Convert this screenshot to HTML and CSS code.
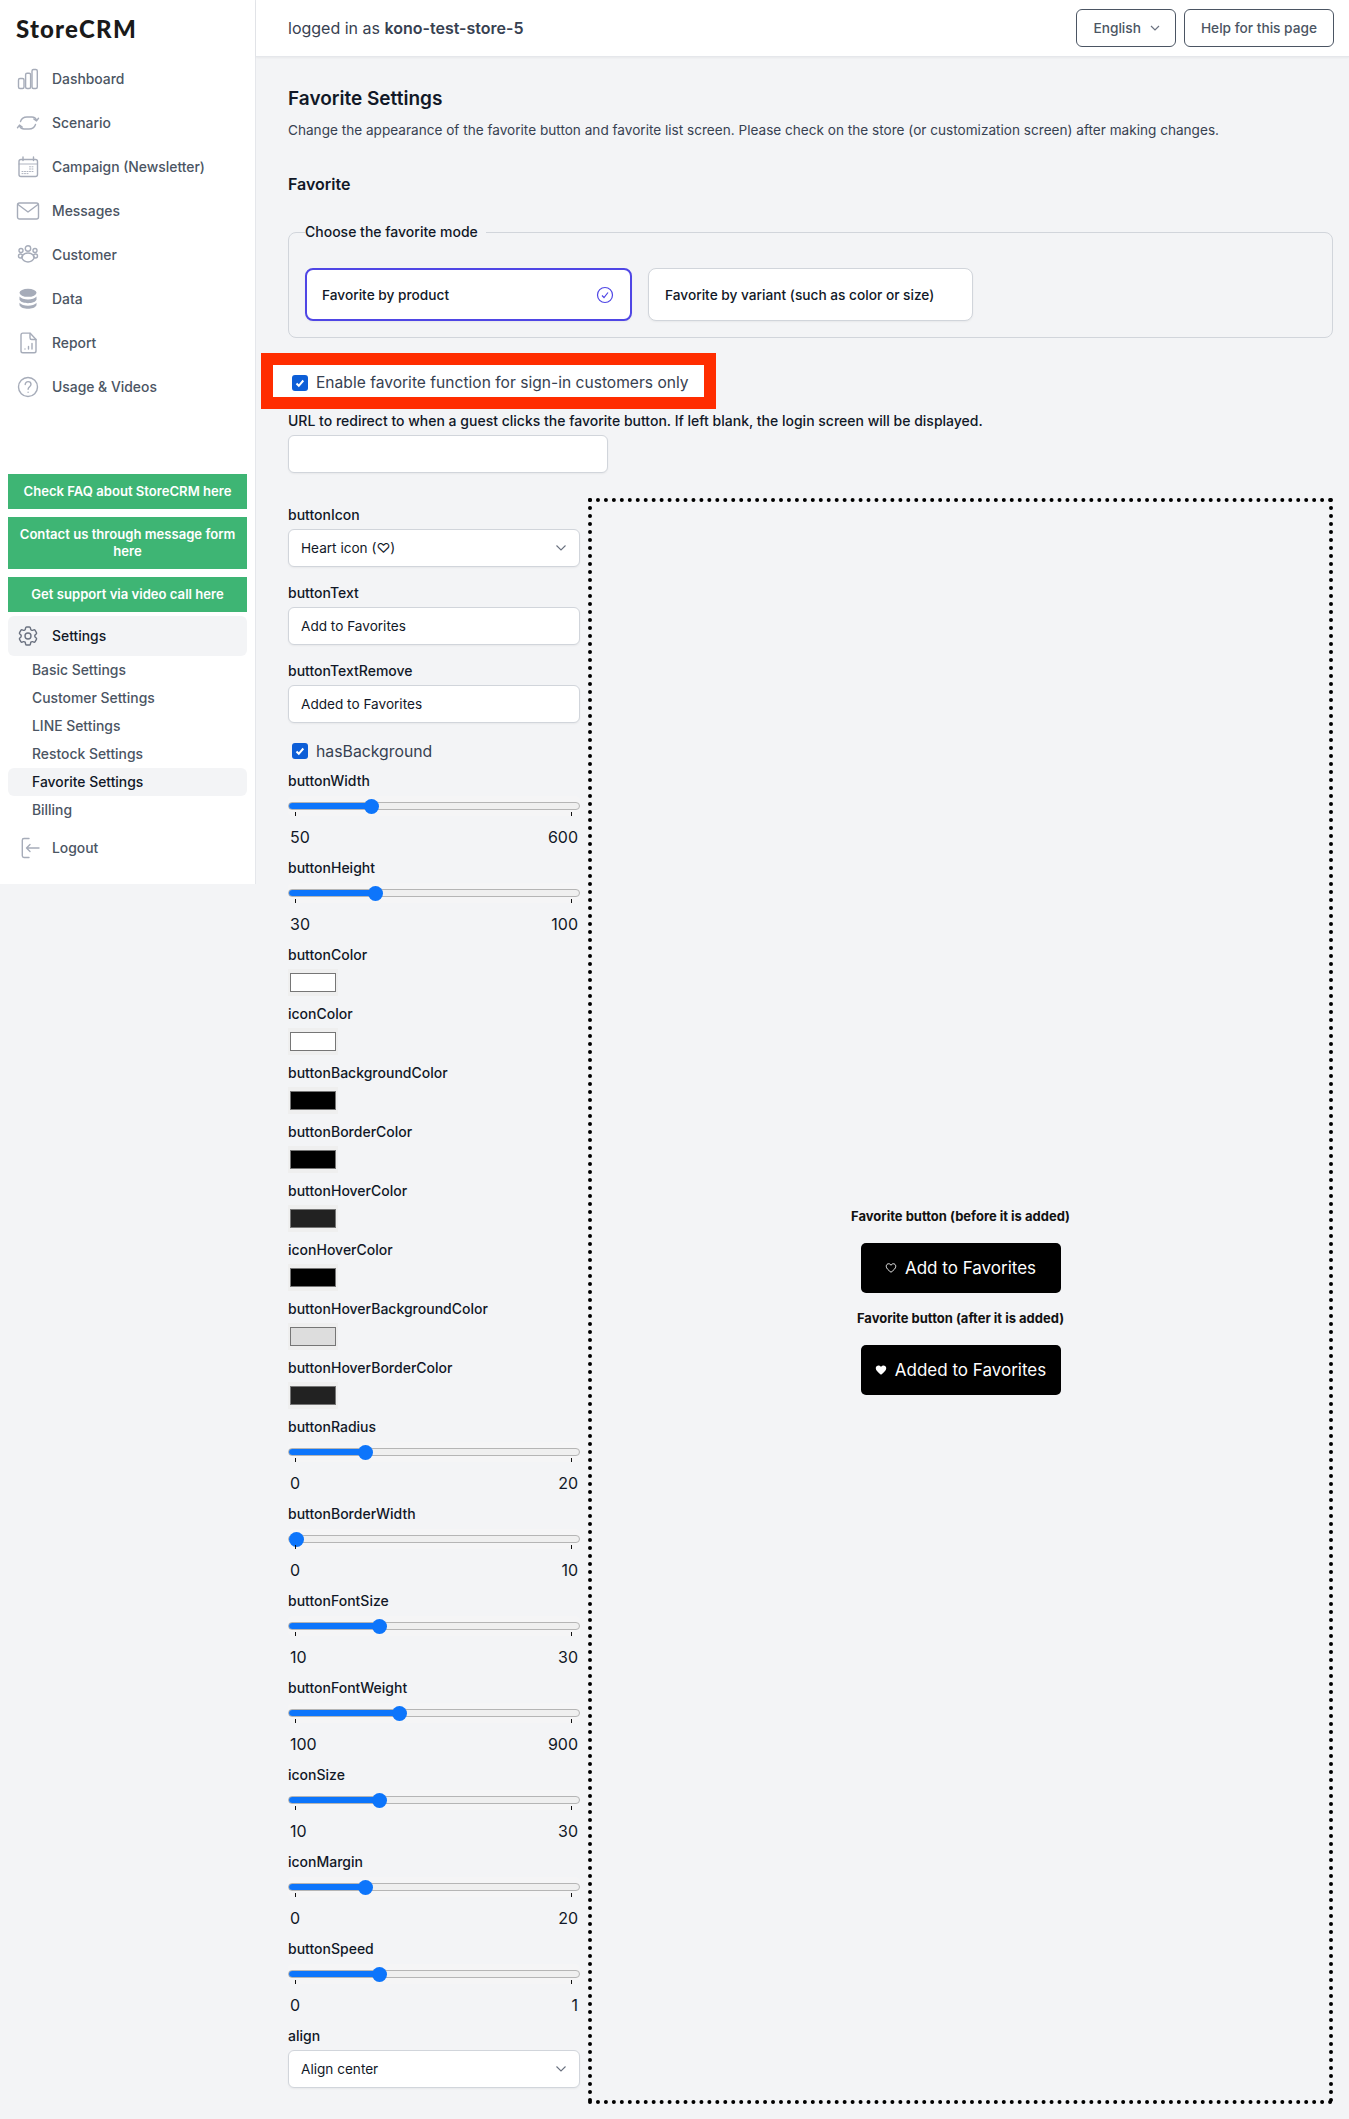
FILE: index.html
```html
<!DOCTYPE html>
<html lang="en">
<head>
<meta charset="utf-8">
<title>Favorite Settings - StoreCRM</title>
<link rel="stylesheet" href="styles.css">
</head>
<body>
<div class="app">
  <aside class="sidebar">
    <div class="logo">StoreCRM</div>
    <nav class="nav">
      <a class="nav-item"><svg class="ico" viewBox="0 0 24 24"><rect x="2.5" y="11.5" width="5.5" height="10" rx="1.5"/><rect x="9.6" y="6.2" width="5" height="15.3" rx="1.5"/><rect x="16" y="2.5" width="5.3" height="19" rx="1.5"/></svg>Dashboard</a>
      <a class="nav-item"><svg class="ico" viewBox="0 0 24 24"><path d="M4.500 10.500C5.500 7.500 8 6 11 6h5c2 0 3.400.9 4.300 2.900"/><path d="M17.800 8l2.700 1.900 2-2.600"/><path d="M19.500 13.500c-1 3-3.500 4.500-6.500 4.500H8c-2 0-3.400-.9-4.300-2.900"/><path d="M6.200 16l-2.700-1.900-2 2.600"/></svg>Scenario</a>
      <a class="nav-item"><svg class="ico" viewBox="0 0 24 24"><rect x="3" y="4.500" width="18.500" height="17" rx="2"/><path class="fine" d="M3 9h18.500" stroke-width="2.400"/><path d="M7 2v3.500M17.500 2v3.500"/><path class="fine" d="M6 16.500h1M8.500 16.500h1M11 16.500h1M13.500 16.500h1M13.500 14h1M16 14h1M16 16.500h1M16 11.800h1M13.500 11.800h1M6 18.600h1M8.500 18.600h1M11 18.600h1"/></svg>Campaign (Newsletter)</a>
      <a class="nav-item"><svg class="ico" viewBox="0 0 24 24"><rect x="1.500" y="4" width="21" height="16" rx="2"/><path d="M2 5.500l10 7.500 10-7.500"/></svg>Messages</a>
      <a class="nav-item"><svg class="ico" viewBox="0 0 24 24"><circle cx="12" cy="5.500" r="2.700"/><circle cx="5" cy="7.500" r="2"/><circle cx="19" cy="7.500" r="2"/><circle cx="4.500" cy="13" r="2"/><circle cx="19.500" cy="13" r="2"/><path d="M12 10c-3.500 0-5.500 2-6.500 4.500 1.500 3 4 4.500 6.500 4.500s5-1.500 6.500-4.500C17.500 12 15.500 10 12 10z"/></svg>Customer</a>
      <a class="nav-item"><svg class="ico solid" viewBox="0 0 24 24"><ellipse cx="12" cy="5.800" rx="8.500" ry="4"/><path d="M3.500 9.500c1.500 2 5 3 8.500 3s7-1 8.500-3v3.300c-1 2.400-5 3.400-8.500 3.400s-7.500-1-8.500-3.400z"/><path d="M3.500 15.800c1.500 2 5 3 8.500 3s7-1 8.500-3v2.500c-1 2.400-5 3.500-8.500 3.500s-7.500-1.100-8.500-3.500z"/></svg>Data</a>
      <a class="nav-item"><svg class="ico" viewBox="0 0 24 24"><path d="M5 4c0-1 .8-1.900 1.800-1.900H14l6 6.400V20c0 1-.8 1.800-1.800 1.800H6.800C5.800 21.800 5 21 5 20z"/><path d="M14 2.500v4.200c0 1 .7 1.800 1.700 1.800H20"/><path d="M9 18v.1M12.500 15.500V18M16 12.500V18"/></svg>Report</a>
      <a class="nav-item"><svg class="ico" viewBox="0 0 24 24"><circle cx="12" cy="12" r="9.500"/><path d="M9.200 9.500c0-1.700 1.300-2.900 2.900-2.900s2.900 1.100 2.900 2.700c0 2.400-2.900 2.400-2.900 5"/><path d="M12.100 17.200v.1"/></svg>Usage &amp; Videos</a>
    </nav>
    <div class="help-links">
      <a class="help-link">Check FAQ about StoreCRM here</a>
      <a class="help-link">Contact us through message form here</a>
      <a class="help-link">Get support via video call here</a>
    </div>
    <a class="nav-item settings"><svg class="ico dark" viewBox="0 0 24 24"><path d="M9.594 3.940c.09-.542.56-.94 1.110-.94h2.593c.55 0 1.020.398 1.110.94l.213 1.281c.063.374.313.686.645.870.074.04.147.083.22.127.324.196.72.257 1.075.124l1.217-.456a1.125 1.125 0 011.370.49l1.296 2.247a1.125 1.125 0 01-.26 1.431l-1.003.827c-.293.24-.438.613-.431.992a6.759 6.759 0 010 .255c-.007.378.138.75.43.99l1.005.828c.424.35.534.954.26 1.430l-1.298 2.247a1.125 1.125 0 01-1.369.491l-1.217-.456c-.355-.133-.75-.072-1.076.124a6.570 6.570 0 01-.22.128c-.331.183-.581.495-.644.869l-.213 1.280c-.09.543-.56.941-1.110.941h-2.594c-.55 0-1.020-.398-1.110-.94l-.213-1.281c-.062-.374-.312-.686-.644-.87a6.520 6.520 0 01-.22-.127c-.325-.196-.72-.257-1.076-.124l-1.217.456a1.125 1.125 0 01-1.369-.49l-1.297-2.247a1.125 1.125 0 01.26-1.431l1.004-.827c.292-.24.437-.613.43-.992a6.932 6.932 0 010-.255c.007-.378-.138-.75-.43-.99l-1.004-.828a1.125 1.125 0 01-.26-1.430l1.297-2.247a1.125 1.125 0 011.370-.491l1.216.456c.356.133.751.072 1.076-.124.072-.044.146-.087.22-.128.332-.183.582-.495.644-.869l.214-1.281z"/><circle cx="12" cy="12" r="3"/></svg>Settings</a>
    <div class="subnav">
      <a class="sub-item">Basic Settings</a>
      <a class="sub-item">Customer Settings</a>
      <a class="sub-item">LINE Settings</a>
      <a class="sub-item">Restock Settings</a>
      <a class="sub-item active">Favorite Settings</a>
      <a class="sub-item">Billing</a>
    </div>
    <a class="nav-item"><svg class="ico" viewBox="0 0 24 24"><path d="M13 2.500H8c-1 0-1.700.8-1.700 1.700v15.600c0 1 .7 1.700 1.700 1.700h5"/><path d="M23 12H10.500M14 8.500L10.500 12l3.500 3.500"/></svg>Logout</a>
  </aside>

  <div class="page">
    <header class="topbar">
      <div class="login">logged in as <strong>kono-test-store-5</strong></div>
      <div class="top-actions">
        <button class="top-btn lang"><span>English</span><svg class="chev" viewBox="0 0 12 12"><path d="M2 4l4 4 4-4"/></svg></button>
        <button class="top-btn">Help for this page</button>
      </div>
    </header>

    <main class="content">
      <h1 class="title">Favorite Settings</h1>
      <p class="subtitle">Change the appearance of the favorite button and favorite list screen. Please check on the store (or customization screen) after making changes.</p>
      <h2 class="section">Favorite</h2>

      <fieldset class="mode">
        <legend class="mode-legend">Choose the favorite mode</legend>
        <div class="mode-grid">
          <div class="mode-card selected"><span>Favorite by product</span><svg class="mode-check" viewBox="0 0 20 20"><circle cx="10" cy="10" r="7.500"/><path d="M7 10.500l2 2 4-5"/></svg></div>
          <div class="mode-card"><span>Favorite by variant (such as color or size)</span></div>
        </div>
      </fieldset>

      <label class="callout"><input class="check" type="checkbox" checked>Enable favorite function for sign-in customers only</label>

      <label class="field-label url-label">URL to redirect to when a guest clicks the favorite button. If left blank, the login screen will be displayed.</label>
      <input class="text-input url-input" type="text">

      <div class="editor">
        <div class="controls">
          <div class="label-row first">buttonIcon</div>
          <select class="text-input select"><option>Heart icon (♡)</option></select>
          <div class="label-row">buttonText</div>
          <input class="text-input" type="text" value="Add to Favorites">
          <div class="label-row">buttonTextRemove</div>
          <input class="text-input" type="text" value="Added to Favorites">
          <label class="check-row"><input class="check" type="checkbox" checked>hasBackground</label>

          <div class="slider"><div class="slider-label">buttonWidth</div><div class="range-box"><input class="range" type="range" min="50" max="600" value="200" style="--fill:27.3%"></div><div class="range-ends"><span>50</span><span>600</span></div></div>
          <div class="slider"><div class="slider-label">buttonHeight</div><div class="range-box"><input class="range" type="range" min="30" max="100" value="50" style="--fill:28.6%"></div><div class="range-ends"><span>30</span><span>100</span></div></div>

          <div class="color"><div class="color-label">buttonColor</div><input class="swatch" type="color" value="#ffffff"></div>
          <div class="color"><div class="color-label">iconColor</div><input class="swatch" type="color" value="#ffffff"></div>
          <div class="color"><div class="color-label">buttonBackgroundColor</div><input class="swatch" type="color" value="#000000"></div>
          <div class="color"><div class="color-label">buttonBorderColor</div><input class="swatch" type="color" value="#000000"></div>
          <div class="color"><div class="color-label">buttonHoverColor</div><input class="swatch" type="color" value="#222222"></div>
          <div class="color"><div class="color-label">iconHoverColor</div><input class="swatch" type="color" value="#000000"></div>
          <div class="color"><div class="color-label">buttonHoverBackgroundColor</div><input class="swatch" type="color" value="#dddddd"></div>
          <div class="color"><div class="color-label">buttonHoverBorderColor</div><input class="swatch" type="color" value="#222222"></div>

          <div class="slider"><div class="slider-label">buttonRadius</div><div class="range-box"><input class="range" type="range" min="0" max="20" value="5" style="--fill:25%"></div><div class="range-ends"><span>0</span><span>20</span></div></div>
          <div class="slider"><div class="slider-label">buttonBorderWidth</div><div class="range-box"><input class="range" type="range" min="0" max="10" value="0" style="--fill:0%"></div><div class="range-ends"><span>0</span><span>10</span></div></div>
          <div class="slider"><div class="slider-label">buttonFontSize</div><div class="range-box"><input class="range" type="range" min="10" max="30" value="16" style="--fill:30%"></div><div class="range-ends"><span>10</span><span>30</span></div></div>
          <div class="slider"><div class="slider-label">buttonFontWeight</div><div class="range-box"><input class="range" type="range" min="100" max="900" value="400" style="--fill:37.5%"></div><div class="range-ends"><span>100</span><span>900</span></div></div>
          <div class="slider"><div class="slider-label">iconSize</div><div class="range-box"><input class="range" type="range" min="10" max="30" value="16" style="--fill:30%"></div><div class="range-ends"><span>10</span><span>30</span></div></div>
          <div class="slider"><div class="slider-label">iconMargin</div><div class="range-box"><input class="range" type="range" min="0" max="20" value="5" style="--fill:25%"></div><div class="range-ends"><span>0</span><span>20</span></div></div>
          <div class="slider"><div class="slider-label">buttonSpeed</div><div class="range-box"><input class="range" type="range" min="0" max="1" step="0.1" value="0.3" style="--fill:30%"></div><div class="range-ends"><span>0</span><span>1</span></div></div>

          <div class="label-row last">align</div>
          <select class="text-input select"><option>Align center</option></select>
        </div>

        <div class="preview">
          <div class="preview-caption">Favorite button (before it is added)</div>
          <button class="fav-btn"><svg class="heart" viewBox="0 0 24 24"><path class="heart-line" d="M12 20.500C7 16.500 2.500 13 2.500 8.500 2.500 5.500 4.800 3.500 7.300 3.500c2 0 3.700 1 4.700 3 1-2 2.700-3 4.700-3 2.500 0 4.800 2 4.800 5 0 4.500-4.500 8-9.500 12z"/></svg>Add to Favorites</button>
          <div class="preview-caption second">Favorite button (after it is added)</div>
          <button class="fav-btn"><svg class="heart" viewBox="0 0 24 24"><path class="heart-fill" d="M12 21.500C7 17 1.500 13.500 1.500 8.500 1.500 5 4.300 3 7 3c2 0 3.900 1 5 3 1.100-2 3-3 5-3 2.700 0 5.500 2 5.500 5.500 0 5-5.500 8.500-10.500 13z"/></svg>Added to Favorites</button>
        </div>
      </div>
    </main>
  </div>
</div>
</body>
</html>
```

FILE: styles.css
```css
* { box-sizing: border-box; }

html, body { margin: 0; padding: 0; }

body {
  background: #f3f4f6;
  color: #111827;
  font-family: Inter, "Liberation Sans", sans-serif;
  font-size: 14px;
}

.app { display: flex; align-items: flex-start; min-height: 2119px; }

/* Sidebar */
.sidebar {
  width: 256px;
  flex: none;
  background: #fff;
  border-right: 1px solid #e5e7eb;
  padding: 0 8px 14px;
}

.logo {
  height: 57px;
  padding: 12px 8px 0;
  font-family: Lato, sans-serif;
  font-size: 24px;
  line-height: 34px;
  font-weight: 900;
  letter-spacing: 1.2px;
  color: #1a1a1a;
}

.nav { display: flex; flex-direction: column; margin-bottom: 65px; }

.nav-item {
  display: flex;
  align-items: center;
  gap: 12px;
  height: 44px;
  padding-left: 8px;
  color: #4b5563;
  font-size: 13.9px;
  font-weight: 500;
  border-radius: 6px;
}

.ico {
  width: 24px;
  height: 24px;
  flex: none;
  fill: none;
  stroke: #a6acb9;
  stroke-width: 1.4;
  stroke-linecap: round;
  stroke-linejoin: round;
}

.ico .fine { stroke-width: .9; }
.ico.solid { fill: #a6acb9; stroke: none; }
.ico.dark { stroke: #6b7280; }

.help-links { display: flex; flex-direction: column; gap: 8px; }

.help-link {
  display: block;
  background: #3eb574;
  color: #fff;
  padding: 9px 8px;
  font-size: 13.1px;
  line-height: 17px;
  font-weight: 600;
  text-align: center;
}

.settings {
  margin-top: 4px;
  height: 40px;
  background: #f3f4f6;
  color: #111827;
}

.subnav { display: flex; flex-direction: column; margin-bottom: 2px; }

.sub-item {
  display: flex;
  align-items: center;
  height: 28px;
  padding-left: 24px;
  color: #4b5563;
  font-size: 13.9px;
  font-weight: 500;
  border-radius: 6px;
}

.sub-item.active { background: #f3f4f6; color: #111827; }

/* Main */
.page { flex: 1; min-width: 0; }

.topbar {
  display: flex;
  align-items: center;
  justify-content: space-between;
  height: 57px;
  padding: 0 15px 1px 32px;
  background: #fff;
  border-bottom: 1px solid #e5e7eb;
  box-shadow: 0 1px 2px rgba(0, 0, 0, .05);
}

.login { font-size: 16px; color: #374151; }
.login strong { font-weight: 600; }

.top-actions { display: flex; gap: 8px; }

.top-btn {
  display: flex;
  align-items: center;
  gap: 8px;
  height: 38px;
  padding: 0 16px;
  background: #fff;
  border: 1px solid #4b5563;
  border-radius: 6px;
  color: #4b5563;
  font: 500 13.7px Inter, sans-serif;
}

.top-btn.lang { padding-right: 14px; }

.chev {
  width: 12px;
  height: 12px;
  fill: none;
  stroke: #6b7280;
  stroke-width: 1.2;
}

.content { padding: 30px 16px 16px 32px; }

.title {
  margin: 0;
  font-size: 19px;
  line-height: 23px;
  font-weight: 600;
  color: #111827;
}

.subtitle {
  margin: 10px 0 0;
  font-size: 13.6px;
  line-height: 20px;
  color: #374151;
}

.section {
  margin: 32px 0 0;
  font-size: 16px;
  line-height: 24px;
  font-weight: 600;
  color: #111827;
}

.mode {
  margin: 26px 0 0;
  padding: 26px 16px 16px;
  border: 1px solid #d1d5db;
  border-radius: 8px;
  min-width: 0;
}

.mode-legend {
  padding: 0 8px 0 0;
  margin-left: 0;
  font-size: 14px;
  line-height: 20px;
  font-weight: 500;
  color: #111827;
}

.mode-grid { display: flex; gap: 16px; }

.mode-card {
  display: flex;
  align-items: center;
  justify-content: space-between;
  width: 325px;
  height: 53px;
  padding: 0 16px;
  background: #fff;
  border: 1px solid #d1d5db;
  border-radius: 8px;
  box-shadow: 0 1px 2px rgba(0, 0, 0, .05);
  font-size: 13.7px;
  font-weight: 500;
  color: #111827;
}

.mode-card.selected { width: 327px; border: 2px solid #4f46e5; padding: 0 15px; }

.mode-check {
  width: 20px;
  height: 20px;
  fill: none;
  stroke: #4f46e5;
  stroke-width: 1.200;
}

.callout {
  display: flex;
  align-items: center;
  gap: 8px;
  width: fit-content;
  height: 56px;
  margin: 15px 0 0 -27px;
  padding: 3px 15px 0 19px;
  background: #fff;
  border: 12px solid #ff2d00;
  font-size: 15.6px;
  color: #374151;
}

.check {
  appearance: none;
  width: 16px;
  height: 16px;
  margin: 0;
  flex: none;
  border-radius: 3px;
  background: #0d5ed7 url("data:image/svg+xml,%3Csvg xmlns='http://www.w3.org/2000/svg' viewBox='0 0 16 16'%3E%3Cpath d='M4.500 8.500l2.300 2.300 4.500-5.300' fill='none' stroke='%23fff' stroke-width='2'/%3E%3C/svg%3E") center / 16px no-repeat;
}

.field-label {
  display: block;
  font-size: 14px;
  line-height: 20px;
  font-weight: 550;
  color: #111827;
}

.url-label { margin-top: 2px; }

.text-input {
  display: block;
  width: 100%;
  height: 38px;
  padding: 0 12px;
  background: #fff;
  border: 1px solid #d1d5db;
  border-radius: 6px;
  box-shadow: 0 1px 2px rgba(0, 0, 0, .05);
  color: #111827;
  font: 400 13.6px Inter, sans-serif;
}

.url-input { width: 320px; margin-top: 4px; }

.select {
  appearance: none;
  background: #fff url("data:image/svg+xml,%3Csvg xmlns='http://www.w3.org/2000/svg' viewBox='0 0 12 12'%3E%3Cpath d='M1.500 3.500L6 8l4.500-4.500' fill='none' stroke='%236b7280' stroke-width='1.100'/%3E%3C/svg%3E") right 12px center / 12px no-repeat;
}

.editor {
  display: grid;
  grid-template-columns: 292px minmax(0, 1fr);
  column-gap: 8px;
  margin-top: 25px;
}

.controls { padding: 7px 0 16px; }

.label-row, .slider-label, .color-label {
  font-size: 14px;
  line-height: 20px;
  font-weight: 550;
  color: #111827;
}

.label-row { margin: 16px 0 4px; }
.label-row.first { margin-top: 0; }
.label-row.last { margin-top: 0; }

.check-row {
  display: flex;
  align-items: center;
  gap: 8px;
  height: 24px;
  margin: 16px 0 8px;
  padding-left: 4px;
  font-size: 15.8px;
  color: #374151;
}

.slider { height: 87px; }

.range-box {
  position: relative;
  height: 20px;
  margin-top: 5px;
  background: #f5f5f6;
  border-radius: 5px;
  display: flex;
  align-items: center;
}

.range-box::before, .range-box::after {
  content: "";
  position: absolute;
  bottom: 0;
  width: 1px;
  height: 4px;
  background: #111;
}

.range-box::before { left: 7px; }
.range-box::after { right: 8px; }

.range {
  appearance: none;
  display: block;
  width: 100%;
  height: 8px;
  margin: 0;
  border-radius: 4px;
  background: #f3f3f3;
}

.range::-webkit-slider-runnable-track {
  height: 8px;
  border: 1px solid #b5b5b5;
  border-radius: 4px;
  background: linear-gradient(to right, #0d75fb var(--fill), #efefef var(--fill));
}

.range::-webkit-slider-thumb {
  appearance: none;
  width: 15px;
  height: 15px;
  margin-top: -4.500px;
  border-radius: 50%;
  background: #0d75fb;
}

.range-ends {
  display: flex;
  justify-content: space-between;
  margin-top: 11px;
  padding: 0 2px;
  font-size: 16px;
  line-height: 20px;
  color: #111827;
}

.color { height: 59px; }

.swatch {
  appearance: none;
  display: block;
  width: 50px;
  height: 27px;
  margin: 4px 0 0;
  padding: 0;
  border: 0;
  background: #efefef;
}

.swatch::-webkit-color-swatch-wrapper { padding: 4px 2px; }
.swatch::-webkit-color-swatch { border: 1px solid #767676; }

.preview {
  display: flex;
  flex-direction: column;
  align-items: center;
  justify-content: center;
  border: 4px dotted #000;
}

.preview-caption {
  font-size: 13px;
  line-height: 16px;
  font-weight: 700;
  color: #111;
  margin-bottom: 19px;
}

.preview-caption.second { margin-top: 17px; }

.fav-btn {
  display: flex;
  align-items: center;
  justify-content: center;
  gap: 8px;
  width: 200px;
  height: 50px;
  border: 0;
  border-radius: 5px;
  background: #000;
  color: #fff;
  font: 400 17px Inter, sans-serif;
}

.heart { width: 12px; height: 12px; }
.heart-line { fill: none; stroke: #fff; stroke-width: 1.800; }
.heart-fill { fill: #fff; }
```
